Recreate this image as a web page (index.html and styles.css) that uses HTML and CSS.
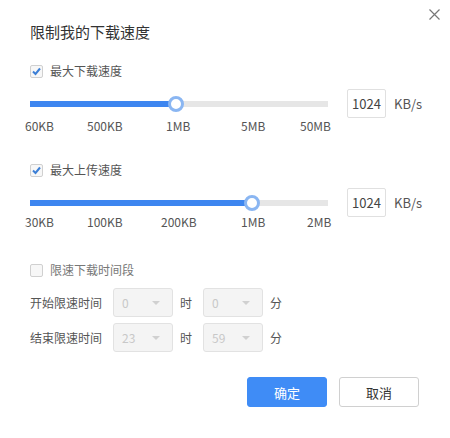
FILE: index.html
```html
<!DOCTYPE html>
<html lang="zh-CN">
<head>
  <meta charset="UTF-8">
  <title>限制我的下载速度</title>
  <link rel="stylesheet" href="styles.css">
</head>
<body>

<div class="dialog">
  <button class="close" aria-label="关闭">
    <svg width="11" height="11" viewBox="0 0 11 11"><path d="M0.5 0.5L10.5 10.5M10.5 0.5L0.5 10.5" stroke="#777" stroke-width="1.2" fill="none"/></svg>
  </button>

  <div class="title">限制我的下载速度</div>

  <label class="check check-first">
    <span class="box checked"><svg width="11" height="11" viewBox="0 0 11 11"><path d="M2 5.5L4.5 8L9 2.5" stroke="#3c7fd6" stroke-width="2" fill="none"/></svg></span>
    最大下载速度
  </label>
  <div class="slider-row">
    <div class="track"><div class="fill" style="width: 49%"><span class="thumb"></span></div></div>
    <div class="num">1024</div>
    <span class="unit">KB/s</span>
  </div>
  <div class="ticks ticks-first">
    <span style="width: 62px">60KB</span>
    <span style="width: 79px">500KB</span>
    <span style="width: 75px">1MB</span>
    <span style="width: 59px">5MB</span>
    <span>50MB</span>
  </div>

  <label class="check check-second">
    <span class="box checked"><svg width="11" height="11" viewBox="0 0 11 11"><path d="M2 5.5L4.5 8L9 2.5" stroke="#3c7fd6" stroke-width="2" fill="none"/></svg></span>
    最大上传速度
  </label>
  <div class="slider-row">
    <div class="track"><div class="fill" style="width: 74.5%"><span class="thumb"></span></div></div>
    <div class="num">1024</div>
    <span class="unit">KB/s</span>
  </div>
  <div class="ticks ticks-second">
    <span style="width: 62px">30KB</span>
    <span style="width: 74px">100KB</span>
    <span style="width: 80px">200KB</span>
    <span style="width: 66px">1MB</span>
    <span>2MB</span>
  </div>

  <label class="check check-third">
    <span class="box"></span>
    限速下载时间段
  </label>
  <div class="time-row time-first">
    <span class="time-label">开始限速时间</span>
    <div class="select"><span>0</span><i class="caret"></i></div>
    <span class="suffix">时</span>
    <div class="select"><span>0</span><i class="caret"></i></div>
    <span class="suffix">分</span>
  </div>
  <div class="time-row time-second">
    <span class="time-label">结束限速时间</span>
    <div class="select"><span>23</span><i class="caret"></i></div>
    <span class="suffix">时</span>
    <div class="select"><span>59</span><i class="caret"></i></div>
    <span class="suffix">分</span>
  </div>

  <div class="actions">
    <button class="btn primary">确定</button>
    <button class="btn">取消</button>
  </div>
</div>

</body>
</html>
```

FILE: styles.css
```css
* {
  box-sizing: border-box;
}

body {
  margin: 0;
  background-color: #fff;
  font-family: "Noto Sans CJK SC", "Noto Sans", sans-serif;
  color: #555;
  font-size: 12px;
}

.dialog {
  position: relative;
  width: 450px;
  height: 438px;
  padding: 22px 30px 0 30px;
}

.close {
  position: absolute;
  top: 9px;
  right: 10px;
  border: none;
  background: none;
  padding: 0;
  width: 11px;
  height: 11px;
  cursor: pointer;
}

.close svg {
  display: block;
}

.title {
  font-size: 15px;
  line-height: 20px;
  color: #333;
}

.check {
  display: flex;
  align-items: center;
  gap: 7px;
  height: 16px;
  line-height: 16px;
  color: #555;
}

.check-first {
  margin-top: 21px;
}

.check-second {
  margin-top: 29px;
}

.check-third {
  margin-top: 33px;
  color: #777;
}

.box {
  display: flex;
  align-items: center;
  justify-content: center;
  width: 13px;
  height: 13px;
  border: 1px solid #d0d0d0;
  border-radius: 2px;
  background-color: #f7f7f7;
}

.slider-row {
  display: flex;
  align-items: center;
  height: 29px;
  margin-top: 10px;
}

.track {
  flex-shrink: 0;
  width: 298px;
  height: 6px;
  background-color: #e6e6e6;
  margin-right: 19px;
}

.fill {
  position: relative;
  height: 6px;
  background-color: #3d86f0;
}

.thumb {
  position: absolute;
  right: -8px;
  top: -5px;
  width: 16px;
  height: 16px;
  border-radius: 50%;
  background-color: #fff;
  border: 3px solid #8ab6f2;
}

.num {
  flex-shrink: 0;
  width: 39px;
  height: 29px;
  border: 1px solid #e0e0e0;
  border-radius: 2px;
  display: flex;
  align-items: center;
  justify-content: center;
  font-size: 13px;
  color: #444;
}

.unit {
  flex-shrink: 0;
  margin-left: 8px;
  font-size: 13px;
  color: #555;
  white-space: nowrap;
}

.ticks {
  display: flex;
  margin-left: -5px;
  line-height: 14px;
  color: #555;
}

.ticks-first {
  margin-top: 1px;
}

.ticks-second {
  margin-top: -2px;
}

.time-row {
  display: flex;
  align-items: center;
  height: 29px;
}

.time-first {
  margin-top: 10px;
}

.time-second {
  margin-top: 6px;
}

.time-label {
  width: 83px;
  color: #555;
}

.select {
  display: flex;
  align-items: center;
  justify-content: space-between;
  width: 60px;
  height: 29px;
  padding: 0 12px 0 8px;
  background-color: #f4f4f4;
  border: 1px solid #e2e2e2;
  border-radius: 3px;
  color: #c8c8c8;
}

.caret {
  width: 0;
  height: 0;
  border-left: 4px solid transparent;
  border-right: 4px solid transparent;
  border-top: 4px solid #d0d0d0;
}

.suffix {
  width: 30px;
  padding-left: 7px;
  color: #555;
}

.actions {
  display: flex;
  justify-content: flex-end;
  gap: 12px;
  margin-top: 25px;
  margin-right: 1px;
}

.btn {
  width: 80px;
  height: 30px;
  border: 1px solid #d0d0d0;
  border-radius: 3px;
  background-color: #fff;
  color: #333;
  font-family: inherit;
  font-size: 13px;
  cursor: pointer;
}

.btn.primary {
  background-color: #3f8cf6;
  border-color: #3f8cf6;
  color: #fff;
}
```
